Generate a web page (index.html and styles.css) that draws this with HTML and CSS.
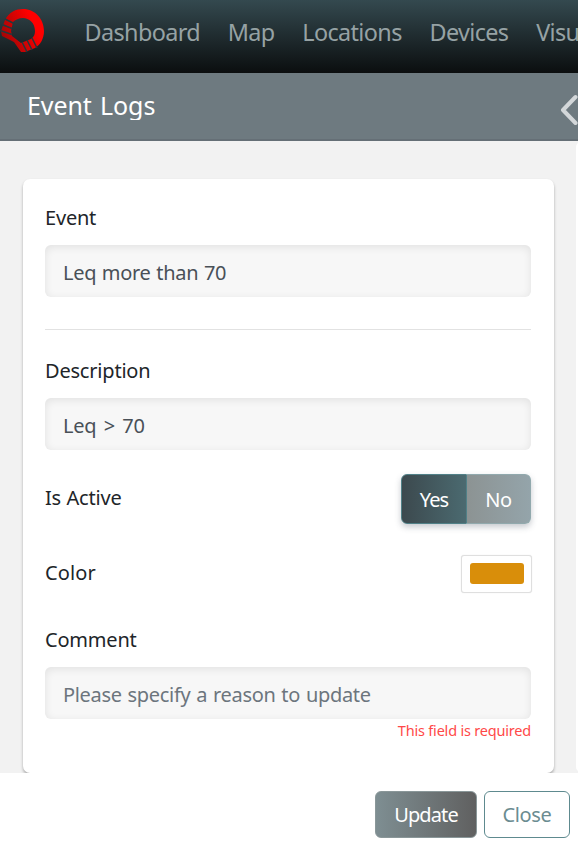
FILE: index.html
```html
<!DOCTYPE html>
<html lang="en">
<head>
<meta charset="utf-8">
<title>Event Logs</title>
<link rel="stylesheet" href="styles.css">
</head>
<body>
<header class="navbar">
  <svg class="logo" width="48" height="56" viewBox="0 0 48 56">
    <defs><linearGradient id="red" x1="0" y1="0.8" x2="1" y2="0.3"><stop offset="0" stop-color="#9b0505"/><stop offset="0.45" stop-color="#d00303"/><stop offset="0.8" stop-color="#ff0000"/></linearGradient></defs>
    <path fill="url(#red)" fill-rule="evenodd" d="M5 20C9 12 16 9 23 9C35 9 44 19 44 31C44 39 40 45 35 48L25 52H21L14 42L2 36L1 31ZM13 22L11 31L12 36L21 43L31 39C34 37 35 34 35 31C35 23 29 18 23 18C19 18 15 20 13 22Z"/>
    <path class="logo-cuts" d="M5 19L14 23.5M2 24.5L12 28.5M0 30.5L12 34.5M22 42L27 52M27 40L32 50M32 38L37 48"/>
  </svg>
  <nav class="links"><a>Dashboard</a><a>Map</a><a>Locations</a><a>Devices</a><a>Visualize</a></nav>
</header>
<div class="titlebar">
  <h1>Event Logs</h1>
  <svg class="back" width="18" height="32" viewBox="0 0 18 32"><path d="M15.5 3L3 16L15.5 29"/></svg>
</div>
<main>
  <form class="card">
    <label class="label">Event</label>
    <div class="input">Leq more than 70</div>
    <hr>
    <label class="label">Description</label>
    <div class="input condition">Leq &gt; 70</div>
    <div class="row active-row"><label class="label">Is Active</label><div class="toggle"><span class="yes">Yes</span><span class="no">No</span></div></div>
    <div class="row color-row"><label class="label">Color</label><div class="picker"><div class="swatch"></div></div></div>
    <label class="label comment">Comment</label>
    <div class="input placeholder">Please specify a reason to update</div>
    <div class="error">This field is required</div>
  </form>
  <div class="next-card"></div>
</main>
<footer><button class="update">Update</button><button class="close">Close</button></footer>
</body>
</html>
```
FILE: styles.css
```css
* { box-sizing: border-box; }
body { margin: 0; width: 578px; height: 844px; overflow: hidden; background: #fff; font-family: "Noto Sans", sans-serif; font-size: 20px; letter-spacing: -0.35px; color: #212529; }
.navbar { height: 73px; display: flex; overflow: hidden; background: linear-gradient(#34494f, #0b0e0f); }
.logo { flex: none; }
.logo-cuts { stroke: #26373c; stroke-width: 1.5; fill: none; }
.links { display: flex; gap: 27.7px; padding-left: 36.5px; font-size: 23.4px; line-height: 65px; letter-spacing: -0.62px; color: #96a2a4; white-space: nowrap; }
.titlebar { height: 68px; display: flex; justify-content: space-between; background: #6e7a80; border-bottom: 2px solid #656f76; }
h1 { margin: 16px 0 0 27px; height: 31px; overflow: hidden; font-weight: 400; font-size: 25px; line-height: 33px; letter-spacing: -0.1px; word-spacing: 2px; color: #fff; }
.back { margin-top: 21px; fill: none; stroke: #d3d7d9; stroke-width: 4; stroke-linecap: round; stroke-linejoin: round; }
main { height: 632px; padding: 38px 0 0 23px; background: #f2f2f2; display: flex; overflow: hidden; }
.card { width: 531px; height: 594px; padding: 24px 23px 0 22px; background: #fff; border-radius: 7px; box-shadow: 0 2px 3px rgba(0,0,0,.3); flex: none; }
.next-card { width: 10px; height: 630px; margin: -37px 0 0 22px; border-radius: 7px; background: #fff; flex: none; }
.label { display: block; line-height: 30px; letter-spacing: -0.2px; }
.input { height: 52px; margin-top: 12px; padding: 0 18px; line-height: 55px; border-radius: 6px; background: #f7f7f7; box-shadow: inset 0 2px 8px rgba(0,0,0,.09); color: #495057; letter-spacing: -0.3px; word-spacing: 0.8px; }
.condition { word-spacing: 2.6px; }
hr { height: 1px; margin: 32px 0 26px; border: 0; background: #e2e2e2; }
.row { display: flex; justify-content: space-between; }
.active-row { margin-top: 24px; height: 50px; }
.active-row .label { line-height: 47px; word-spacing: 0.5px; }
.toggle { display: flex; width: 130px; border-radius: 6px; box-shadow: 0 3px 6px rgba(50,60,80,.28); line-height: 50px; color: #fff; text-align: center; }
.toggle span { border: 1px solid #508087; }
.toggle .yes { width: 66px; letter-spacing: -0.9px; border-radius: 6px 0 0 6px; background: linear-gradient(90deg, #3c494e, #4b6a70); }
.toggle .no { width: 64px; border-color: #91a9ad; border-left: 0; border-radius: 0 6px 6px 0; background: linear-gradient(90deg, #8c9393, #94a4aa); }
.color-row { margin-top: 30px; height: 40px; }
.color-row .label { line-height: 37px; letter-spacing: 0.1px; }
.picker { width: 71px; height: 38px; margin: 1px -1px 0 0; padding: 7px 7px 7px 8px; border: 1px solid #dfdfdf; border-radius: 3px; background: #fff; box-shadow: 0 0 1px #ddd; }
.swatch { height: 21px; border-radius: 3px; background: #d98e0a; }
.comment { margin-top: 31px; }
.placeholder { color: #6c757d; letter-spacing: -0.32px; word-spacing: 1px; }
.error { text-align: right; font-size: 14.5px; line-height: 23px; letter-spacing: -0.2px; color: #ff4848; }
footer { height: 71px; padding: 18px 8px 0 0; display: flex; justify-content: flex-end; gap: 7px; background: #fff; }
button { height: 47px; padding: 0; border-radius: 6px; font: inherit; letter-spacing: inherit; line-height: 46px; }
.update { width: 102px; border: 1px solid #8a9799; background: linear-gradient(90deg, #7e8e92, #606060); color: #fff; letter-spacing: -0.9px; }
.close { width: 86px; border: 1px solid #5e8a8f; background: #fff; color: #6b8c91; }
```
